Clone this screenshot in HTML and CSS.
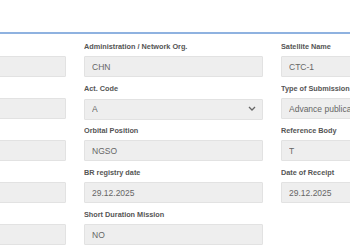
FILE: index.html
```html
<!DOCTYPE html>
<html lang="en">
<head>
  <meta charset="UTF-8" />
  <title>Notice Details</title>
  <link rel="stylesheet" href="styles.css">
</head>
<body>
  <div class="panel">
    <div class="panel-rule"></div>
    <div class="form-grid">
      <div class="field">
        <label>&nbsp;</label>
        <input type="text" value="" disabled />
      </div>
      <div class="field">
        <label>Administration / Network Org.</label>
        <input type="text" value="CHN" disabled />
      </div>
      <div class="field">
        <label>Satellite Name</label>
        <input type="text" value="CTC-1" disabled />
      </div>

      <div class="field">
        <label>&nbsp;</label>
        <input type="text" value="" disabled />
      </div>
      <div class="field">
        <label>Act. Code</label>
        <div class="select-wrap">
          <select disabled>
            <option>A</option>
          </select>
          <svg class="chevron" width="8" height="5" viewBox="0 0 8 5"><path d="M1 1l3 3 3-3" fill="none" stroke="#666" stroke-width="1.3"/></svg>
        </div>
      </div>
      <div class="field">
        <label>Type of Submission</label>
        <input type="text" value="Advance publication" disabled />
      </div>

      <div class="field">
        <label>&nbsp;</label>
        <input type="text" value="" disabled />
      </div>
      <div class="field">
        <label>Orbital Position</label>
        <input type="text" value="NGSO" disabled />
      </div>
      <div class="field">
        <label>Reference Body</label>
        <input type="text" value="T" disabled />
      </div>

      <div class="field">
        <label>&nbsp;</label>
        <input type="text" value="" disabled />
      </div>
      <div class="field">
        <label>BR registry date</label>
        <input type="text" value="29.12.2025" disabled />
      </div>
      <div class="field">
        <label>Date of Receipt</label>
        <input type="text" value="29.12.2025" disabled />
      </div>

      <div class="field">
        <label>&nbsp;</label>
        <input type="text" value="" disabled />
      </div>
      <div class="field">
        <label>Short Duration Mission</label>
        <input type="text" value="NO" disabled />
      </div>
    </div>
  </div>
</body>
</html>
```

FILE: styles.css
```css
body {
  margin: 0;
  font-family: "Liberation Sans", Arial, sans-serif;
  background-color: #ffffff;
  overflow: hidden;
}

.panel {
  padding-top: 32px;
}

.panel-rule {
  height: 2px;
  background-color: #8fb2e0;
}

.form-grid {
  display: grid;
  grid-template-columns: 179px 179px 179px;
  column-gap: 18px;
  margin-left: -113px;
  padding-top: 8px;
}

.field {
  display: flex;
  flex-direction: column;
  height: 42px;
}

.field label {
  font-size: 7.3px;
  font-weight: bold;
  color: #555555;
  line-height: 10px;
  margin-bottom: 4px;
  white-space: nowrap;
  overflow: hidden;
}

.field input,
.field select {
  box-sizing: border-box;
  width: 100%;
  height: 21px;
  padding: 0 7px;
  font-family: "Liberation Sans", Arial, sans-serif;
  font-size: 8.5px;
  color: #666666;
  background-color: #eeeeee;
  border: 1px solid #e2e2e2;
  border-radius: 1px;
  margin: 0;
}

.select-wrap {
  position: relative;
}

.field select {
  appearance: none;
  -webkit-appearance: none;
  opacity: 1;
}

.chevron {
  position: absolute;
  right: 7px;
  top: 8px;
}
```
